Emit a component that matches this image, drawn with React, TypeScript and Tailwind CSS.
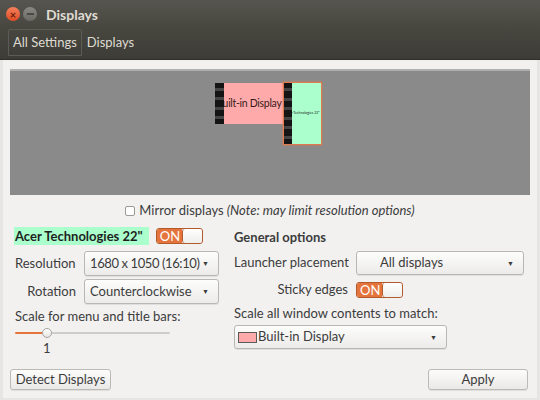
import React from "react";

function Dropdown({
  children,
  className,
}: {
  children: React.ReactNode;
  className: string;
}) {
  return (
    <div
      className={`flex items-center rounded-[3px] border border-[#b9b7b2] bg-gradient-to-b from-[#fdfdfc] to-[#ecebe9] shadow-[0_1px_0_rgba(0,0,0,0.08)] ${className}`}
    >
      <div className="flex-1 flex items-center min-w-0">{children}</div>
      <span className="text-[7px] text-[#3c3c3c] mr-[9px]">▼</span>
    </div>
  );
}

function Toggle() {
  return (
    <div className="flex h-[16px] w-[47px] rounded-[3px] border border-[#b25a2c] overflow-hidden">
      <div className="w-[25px] bg-[#e5743c] text-white text-[13px] leading-[14px] pl-[3px]">
        ON
      </div>
      <div className="flex-1 bg-gradient-to-b from-[#ffffff] to-[#eeeeec] border-l border-[#b25a2c] rounded-[3px]" />
    </div>
  );
}

function Button({ label, className }: { label: string; className: string }) {
  return (
    <div
      className={`h-[21px] flex items-center justify-center rounded-[3px] border border-[#bcbab5] bg-gradient-to-b from-[#fcfcfb] to-[#eae9e7] text-[13px] text-[#3c3c3c] shadow-[0_1px_0_rgba(0,0,0,0.08)] ${className}`}
    >
      {label}
    </div>
  );
}

export default function App() {
  return (
    <div
      className="w-[540px] h-[400px] overflow-hidden bg-[#f2f1f0] flex flex-col"
      style={{ fontFamily: 'Lato, "Noto Sans", sans-serif' }}
    >
      {/* Title bar */}
      <div className="h-[28px] bg-gradient-to-b from-[#56554f] to-[#47463f] flex items-center pl-[6px]">
        <div className="w-[14px] h-[14px] rounded-full bg-gradient-to-b from-[#f5805a] to-[#de4a21] flex items-center justify-center text-[#6b1f0b] text-[11px] leading-none font-bold">
          ×
        </div>
        <div className="w-[14px] h-[14px] rounded-full bg-gradient-to-b from-[#8a8984] to-[#6a6964] ml-[3px] flex items-center justify-center">
          <div className="w-[7px] h-[2px] bg-[#4a4944]" />
        </div>
        <span className="ml-[9px] text-[14px] font-bold text-[#dfdbd2]">Displays</span>
      </div>

      {/* Toolbar */}
      <div className="h-[32px] bg-gradient-to-b from-[#47463f] to-[#3d3c37] flex items-end pl-[8px] pb-[3px] border-b border-[#2f2e2a]">
        <div className="h-[27px] px-[4px] flex items-center border border-[#5c5b55] rounded-t-[2px] text-[13px] text-[#dfdbd2]">
          All Settings
        </div>
        <div className="h-[27px] ml-[5px] flex items-center text-[13px] text-[#dfdbd2]">
          Displays
        </div>
      </div>

      {/* Content */}
      <div className="flex-1 flex flex-col border-x-[3px] border-b-[2px] border-[#e6e5e3] px-[7px] pt-[9px]">
        {/* Preview */}
        <div className="h-[126px] shrink-0 bg-[#8a8a8a] border-t-2 border-[#b0b0b0] flex justify-center pt-[11px]">
          <div className="flex items-start ml-[-4px]">
            <div className="flex h-[41px] mt-[1px]">
              <div className="w-[9px] bg-[#141414] flex flex-col justify-around py-[2px]">
                <div className="h-[3px] bg-[#444]" />
                <div className="h-[3px] bg-[#444]" />
                <div className="h-[3px] bg-[#444]" />
                <div className="h-[3px] bg-[#444]" />
              </div>
              <div className="w-[59px] bg-[#ffaaaa] overflow-hidden flex items-center justify-end">
                <span className="text-[10.5px] tracking-[-0.3px] whitespace-nowrap text-[#3a1a1a] mr-[1px]">
                  Built-in Display
                </span>
              </div>
            </div>
            <div className="flex h-[63px] border border-[#e07b4f] shadow-[0_0_2px_#e07b4f]">
              <div className="w-[8px] bg-[#141414] flex flex-col justify-around py-[2px]">
                <div className="h-[3px] bg-[#444]" />
                <div className="h-[3px] bg-[#444]" />
                <div className="h-[3px] bg-[#444]" />
                <div className="h-[3px] bg-[#444]" />
                <div className="h-[3px] bg-[#444]" />
                <div className="h-[3px] bg-[#444]" />
              </div>
              <div className="w-[29px] bg-[#aaffcc] overflow-hidden flex items-center justify-end">
                <span className="text-[3.5px] whitespace-nowrap text-[#222] mr-[1px]">
                  Acer Technologies 22"
                </span>
              </div>
            </div>
          </div>
        </div>

        {/* Mirror */}
        <div className="flex items-center justify-center h-[32px] text-[13px] text-[#3c3c3c]">
          <div className="w-[10px] h-[10px] border border-[#9c9a95] rounded-[2px] bg-white mr-[4px]" />
          <span>Mirror displays</span>
          <span className="italic ml-[3px]">(Note: may limit resolution options)</span>
        </div>

        {/* Settings grid */}
        <div className="flex">
          {/* Left column */}
          <div className="w-[224px] flex flex-col pl-[4px]">
            <div className="flex items-center h-[18px]">
              <span className="bg-[#aaffcc] text-[13px] font-bold text-[#1e1e1e] pl-[1px] pr-[6px] h-[18px] leading-[18px]">
                Acer Technologies 22"
              </span>
              <div className="ml-[7px]">
                <Toggle />
              </div>
            </div>
            <div className="flex items-center mt-[6px]">
              <span className="w-[70px] text-[13px] text-[#3c3c3c] pl-[1px]">Resolution</span>
              <Dropdown className="w-[135px] h-[25px]">
                <span className="text-[13px] tracking-[-0.4px] text-[#3c3c3c] pl-[5px] whitespace-nowrap">
                  1680 x 1050 (16:10)
                </span>
              </Dropdown>
            </div>
            <div className="flex items-center mt-[3px]">
              <span className="w-[70px] text-[13px] text-[#3c3c3c] text-right pr-[8px]">Rotation</span>
              <Dropdown className="w-[135px] h-[25px]">
                <span className="text-[13px] text-[#3c3c3c] pl-[5px]">Counterclockwise</span>
              </Dropdown>
            </div>
            <span className="mt-[3px] text-[13px] text-[#3c3c3c] pl-[1px] leading-[18px]">
              Scale for menu and title bars:
            </span>
            <div className="flex items-center h-[14px] mt-[1px] w-[155px] ml-[1px]">
              <div className="w-[27px] h-[2px] bg-[#e5743c] rounded-l" />
              <div className="w-[10px] h-[10px] rounded-full border border-[#a5a39e] bg-gradient-to-b from-white to-[#e6e5e2] shrink-0" />
              <div className="flex-1 h-[2px] bg-[#cfcdc9] rounded-r" />
            </div>
            <span className="text-[13px] text-[#3c3c3c] ml-[29px] leading-[16px]">1</span>
          </div>

          {/* Right column */}
          <div className="flex-1 flex flex-col">
            <span className="text-[13px] font-bold text-[#3c3c3c] h-[18px] leading-[18px] mt-[1px]">
              General options
            </span>
            <div className="flex items-center mt-[5px]">
              <span className="w-[122px] text-[13px] text-[#3c3c3c]">Launcher placement</span>
              <Dropdown className="w-[168px] h-[24px]">
                <span className="text-[13px] text-[#3c3c3c] pl-[23px]">All displays</span>
              </Dropdown>
            </div>
            <div className="flex items-center mt-[6px] h-[18px]">
              <span className="w-[122px] text-[13px] text-[#3c3c3c] text-right pr-[8px]">Sticky edges</span>
              <Toggle />
            </div>
            <span className="mt-[5px] text-[13px] text-[#3c3c3c] leading-[18px]">
              Scale all window contents to match:
            </span>
            <Dropdown className="w-[213px] h-[24px] mt-[3px]">
              <div className="w-[19px] h-[11px] bg-[#ffaaaa] border border-[#5a5a5a] ml-[3px]" />
              <span className="text-[13px] text-[#3c3c3c] ml-[1px]">Built-in Display</span>
            </Dropdown>
          </div>
        </div>

        {/* Buttons */}
        <div className="flex justify-between mt-[13px] pr-[2px]">
          <Button label="Detect Displays" className="w-[101px]" />
          <Button label="Apply" className="w-[100px]" />
        </div>
      </div>
    </div>
  );
}
